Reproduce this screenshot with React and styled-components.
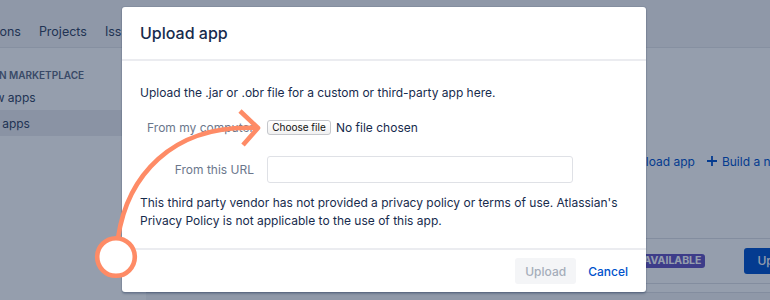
import React from "react";
import styled, { createGlobalStyle } from "styled-components";

const GlobalStyle = createGlobalStyle`
  html, body {
    margin: 0;
    padding: 0;
  }
  body {
    width: 770px;
    height: 300px;
    overflow: hidden;
    font-family: Inter, "Noto Sans", "Liberation Sans", sans-serif;
    color: #172b4d;
    -webkit-font-smoothing: antialiased;
  }
  * {
    box-sizing: border-box;
  }
`;

const Frame = styled.div`
  position: relative;
  width: 770px;
  height: 300px;
  overflow: hidden;
  background: #fff;
`;

/* the page behind the dialog, cropped on the left */
const Page = styled.div`
  width: 900px;
  height: 300px;
  margin-left: -70px;
  display: flex;
  flex-direction: column;
`;

const TopNav = styled.header`
  flex: none;
  height: 48px;
  background: #f4f5f7;
  border-bottom: 1px solid #e4e6ea;
  display: flex;
  align-items: flex-end;
  gap: 18px;
  padding: 0 0 7px 18px;
`;

const NavItem = styled.span`
  font-size: 12.5px;
  line-height: 16px;
  color: #344563;
`;

const Body = styled.div`
  flex: 1;
  display: flex;
`;

const Sidebar = styled.nav`
  flex: none;
  width: 216px;
  padding-top: 20px;
`;

const SideHeading = styled.div`
  padding-left: 20px;
  margin-bottom: 2px;
  font-size: 10px;
  line-height: 14px;
  font-weight: 600;
  text-transform: uppercase;
  color: #5e6c84;
`;

const SideItem = styled.div`
  height: 26px;
  display: flex;
  align-items: center;
  padding-left: 23px;
  font-size: 12px;
  color: #344563;
  background: ${(p) => (p.$selected ? "#ebecf0" : "transparent")};
`;

const Main = styled.main`
  flex: 1;
  padding-top: 101px;
  padding-right: 18px;
  display: flex;
  flex-direction: column;
`;

const Toolbar = styled.div`
  height: 24px;
  display: flex;
  align-items: center;
  justify-content: flex-end;
  gap: 11px;
  margin-bottom: 65px;
`;

const ToolLink = styled.span`
  display: inline-flex;
  align-items: center;
  gap: 4px;
  font-size: 12px;
  color: #0052cc;
`;

const Row = styled.div`
  height: ${(p) => p.$h || 45}px;
  display: flex;
  align-items: center;
  justify-content: flex-end;
  gap: 39px;
  border-top: 1px solid #dfe1e6;
  background: ${(p) => p.$bg || "transparent"};
`;

const Lozenge = styled.span`
  height: 14px;
  padding: 0 4px;
  border-radius: 3px;
  background: #6554c0;
  color: #fff;
  font-size: 10.5px;
  font-weight: 700;
  line-height: 14px;
  text-transform: uppercase;
`;

const PrimaryButton = styled.span`
  height: 26px;
  padding: 0 13px;
  border-radius: 3px;
  background: #0052cc;
  color: #fff;
  font-size: 12px;
  font-weight: 500;
  line-height: 26px;
`;

const Blanket = styled.div`
  position: absolute;
  inset: 0;
  background: rgba(9, 30, 66, 0.43);
`;

const Dialog = styled.section`
  position: absolute;
  top: 7px;
  left: 122px;
  width: 524px;
  height: 285px;
  background: #fff;
  border-radius: 3px;
  box-shadow: 0 0 0 1px rgba(9, 30, 66, 0.08), 0 2px 2px rgba(9, 30, 66, 0.25);
  display: flex;
  flex-direction: column;
`;

const DialogHeader = styled.header`
  height: 54px;
  padding: 14px 18px;
  border-bottom: 2px solid #ebecf0;
`;

const Title = styled.h1`
  margin: 0;
  font-size: 16px;
  line-height: 24px;
  font-weight: 500;
  color: #172b4d;
`;

const DialogBody = styled.div`
  flex: 1;
  padding: 22px 18px 16px;
  font-size: 12px;
`;

const Text = styled.p`
  margin: 0 0 ${(p) => p.$mb || 0}px;
  line-height: ${(p) => p.$lh || 20}px;
  color: #172b4d;
`;

const Field = styled.div`
  display: grid;
  grid-template-columns: 114px 1fr;
  column-gap: 13px;
  align-items: center;
  height: ${(p) => p.$h}px;
  margin-bottom: ${(p) => p.$mb}px;
`;

const Label = styled.label`
  text-align: right;
  color: #6b778c;
  white-space: nowrap;
`;

const FilePicker = styled.div`
  display: flex;
  align-items: center;
  gap: 5px;
`;

const ChooseButton = styled.button`
  height: 15px;
  width: 64px;
  padding: 0;
  border: 1px solid #c5c7cc;
  border-radius: 3px;
  background: linear-gradient(#fff, #f1f1f1);
  font-family: inherit;
  font-size: 10px;
  line-height: 13px;
  color: #111;
`;

const FileName = styled.span`
  color: #172b4d;
`;

const UrlInput = styled.input`
  width: 306px;
  height: 27px;
  border: 1px solid #dfe1e6;
  border-radius: 3px;
  background: #fff;
  font-family: inherit;
  font-size: 12px;
`;

const DialogFooter = styled.footer`
  height: 44px;
  border-top: 2px solid #ebecf0;
  display: flex;
  justify-content: flex-end;
  align-items: center;
  gap: 2px;
  padding: 0 8px 0 0;
`;

const FooterButton = styled.button`
  height: 26px;
  padding: 0 10px;
  border: 0;
  border-radius: 3px;
  font-family: inherit;
  font-size: 12px;
  font-weight: 500;
  background: ${(p) => (p.$subtle ? "transparent" : "#f4f5f7")};
  color: ${(p) => (p.$subtle ? "#0052cc" : "#a5adba")};
`;

const Annotation = styled.svg`
  position: absolute;
  inset: 0;
  pointer-events: none;
`;

function PlusIcon() {
  return (
    <svg width="12" height="12" viewBox="0 0 12 12">
      <path d="M6 1v10M1 6h10" stroke="#0052cc" strokeWidth="1.8" />
    </svg>
  );
}

function UploadIcon() {
  return (
    <svg width="12" height="12" viewBox="0 0 12 12">
      <path d="M6 9V2M3 5l3-3 3 3M2 11h8" stroke="#0052cc" strokeWidth="1.6" fill="none" />
    </svg>
  );
}

export default function App() {
  return (
    <Frame>
      <GlobalStyle />
      <Page>
        <TopNav>
          <NavItem>Applications</NavItem>
          <NavItem>Projects</NavItem>
          <NavItem>Issues</NavItem>
          <NavItem>Manage apps</NavItem>
        </TopNav>
        <Body>
          <Sidebar>
            <SideHeading>Atlassian Marketplace</SideHeading>
            <SideItem>Find new apps</SideItem>
            <SideItem $selected>Manage apps</SideItem>
          </Sidebar>
          <Main>
            <Toolbar>
              <ToolLink>
                <UploadIcon />
                Upload app
              </ToolLink>
              <ToolLink>
                <PlusIcon />
                Build a new app
              </ToolLink>
            </Toolbar>
            <Row>
              <Lozenge>Update available</Lozenge>
              <PrimaryButton>Update</PrimaryButton>
            </Row>
            <Row $h={9} />
            <Row $h={20} $bg="#f4f5f7" />
          </Main>
        </Body>
      </Page>
      <Blanket />
      <Dialog>
        <DialogHeader>
          <Title>Upload app</Title>
        </DialogHeader>
        <DialogBody>
          <Text $mb={17}>Upload the .jar or .obr file for a custom or third-party app here.</Text>
          <Field $h={15} $mb={21}>
            <Label>From my computer</Label>
            <FilePicker>
              <ChooseButton>Choose file</ChooseButton>
              <FileName>No file chosen</FileName>
            </FilePicker>
          </Field>
          <Field $h={27} $mb={11}>
            <Label>From this URL</Label>
            <UrlInput type="text" />
          </Field>
          <Text $lh={18}>
            This third party vendor has not provided a privacy policy or terms of use. Atlassian's Privacy
            Policy is not applicable to the use of this app.
          </Text>
        </DialogBody>
        <DialogFooter>
          <FooterButton disabled>Upload</FooterButton>
          <FooterButton $subtle>Cancel</FooterButton>
        </DialogFooter>
      </Dialog>
      <Annotation width="770" height="300" viewBox="0 0 770 300">
        <path d="M118 238 C 127 178, 170 124, 257 128" stroke="#fe8b66" strokeWidth="4.6" fill="none" />
        <path d="M240 111 L 258 128 L 243 145" stroke="#fe8b66" strokeWidth="4.6" fill="none" strokeLinejoin="round" />
        <circle cx="116" cy="257" r="18.8" fill="#fff" stroke="#fe8b66" strokeWidth="4.6" />
      </Annotation>
    </Frame>
  );
}
